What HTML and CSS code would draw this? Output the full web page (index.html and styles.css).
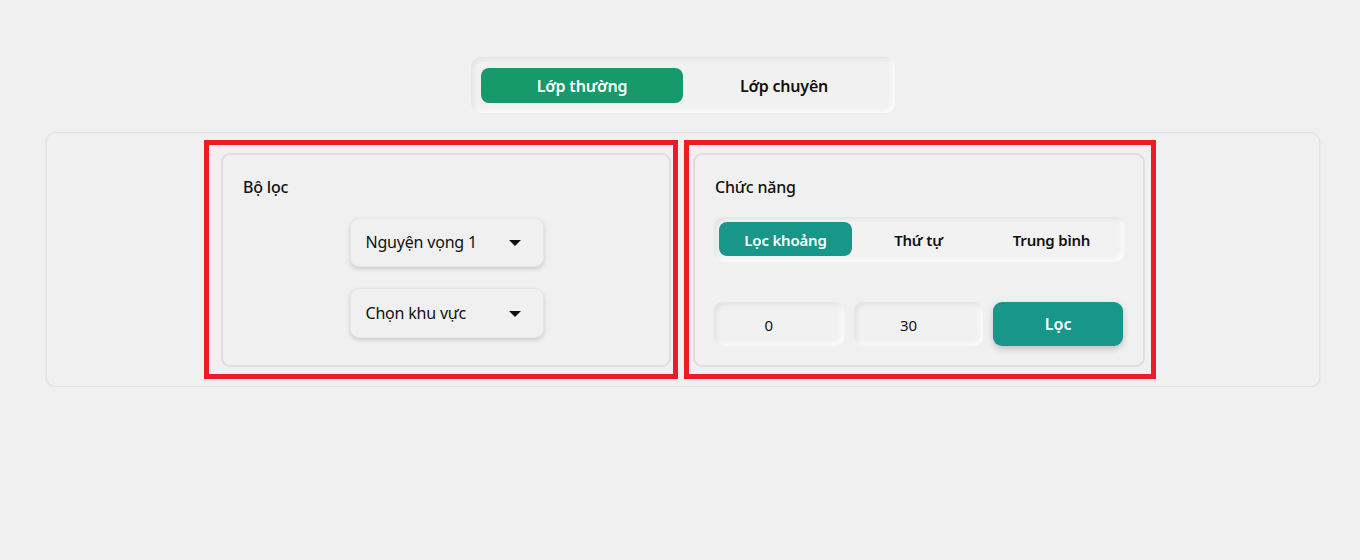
FILE: index.html
```html
<!DOCTYPE html>
<html lang="vi">
<head>
<meta charset="utf-8">
<title>Lọc điểm</title>
<link rel="stylesheet" href="styles.css">
</head>
<body>
<div class="page">
  <div class="class-tabs">
    <button class="class-tab active">Lớp thường</button>
    <button class="class-tab">Lớp chuyên</button>
  </div>

  <div class="main-card">
    <div class="mark mark-left">
      <section class="panel panel-left">
        <h2 class="panel-title">Bộ lọc</h2>
        <div class="selects">
          <div class="select">
            <span>Nguyện vọng 1</span>
            <svg class="caret" width="12" height="6" viewBox="0 0 12 6"><path d="M0 0H12L6 6Z" fill="#111"/></svg>
          </div>
          <div class="select">
            <span>Chọn khu vực</span>
            <svg class="caret" width="12" height="6" viewBox="0 0 12 6"><path d="M0 0H12L6 6Z" fill="#111"/></svg>
          </div>
        </div>
      </section>
    </div>

    <div class="mark mark-right">
      <section class="panel panel-right">
        <h2 class="panel-title">Chức năng</h2>
        <div class="func-tabs">
          <button class="func-tab active">Lọc khoảng</button>
          <button class="func-tab">Thứ tự</button>
          <button class="func-tab">Trung bình</button>
        </div>
        <div class="range-row">
          <div class="num-input">0</div>
          <div class="num-input">30</div>
          <button class="filter-btn">Lọc</button>
        </div>
      </section>
    </div>
  </div>
</div>
</body>
</html>
```

FILE: styles.css
```css
* { box-sizing: border-box; }

html, body {
  margin: 0;
  padding: 0;
  background: #f0f0f0;
}

body {
  font-family: "Noto Sans", "Open Sans", sans-serif;
  color: #111;
  font-size: 16px;
}

.page {
  padding: 57px 40px 0 46px;
  display: flex;
  flex-direction: column;
  align-items: center;
}

button {
  font-family: inherit;
  border: none;
  background: transparent;
  cursor: pointer;
  padding: 0;
  color: #111;
}

/* top class tabs */
.class-tabs {
  display: flex;
  padding: 11px 10px 10px 10px;
  border-radius: 10px;
  background: #f1f1f1;
  box-shadow: inset 2px 2px 5px rgba(0,0,0,0.07), inset -2px -2px 5px rgba(255,255,255,0.9);
}

.class-tab {
  width: 202px;
  height: 35px;
  border-radius: 8px;
  font-size: 16px;
  font-weight: 600;
  letter-spacing: -0.2px;
}

.class-tab.active {
  background: #16996b;
  color: #fff;
}

/* main card */
.main-card {
  align-self: stretch;
  margin-top: 19px;
  display: flex;
  justify-content: center;
  gap: 6px;
  padding: 7px 6px 7px 0;
  border-radius: 10px;
  border: 1px solid #e2e2e2;
  background: #f0f0f0;
  box-shadow: 0 1px 3px rgba(0,0,0,0.07);
}

.mark {
  border: 5px solid #ed1c24;
  display: flex;
}

.mark-left { padding: 8px 2px 7px 12px; }
.mark-right { padding: 8px 6px 7px 4px; }

.panel {
  border: 2px solid #dedede;
  border-radius: 9px;
  background: #f0f0f0;
  height: 214px;
  padding: 20px 20px 0 20px;
}

.panel-left { width: 450px; }
.panel-right { width: 452px; }

.panel-title {
  margin: 0;
  font-size: 16px;
  font-weight: 500;
  line-height: 24px;
  letter-spacing: -0.2px;
}

/* selects */
.selects {
  margin-top: 19px;
  display: flex;
  flex-direction: column;
  align-items: center;
  gap: 21px;
  padding-left: 1px;
}

.select {
  width: 194px;
  height: 49px;
  display: flex;
  align-items: center;
  justify-content: space-between;
  padding: 0 22px 0 15px;
  border-radius: 9px;
  border: 1px solid #e6e6e6;
  background: #f0f0f0;
  box-shadow: 0 2px 4px rgba(0,0,0,0.16);
  font-size: 16px;
  letter-spacing: -0.2px;
}

.select span { margin-top: -1px; }

.select + .select { height: 50px; }

.caret { display: block; margin-top: 1px; }

/* function tabs */
.func-tabs {
  margin-top: 18px;
  margin-left: -1px;
  width: 410px;
  display: flex;
  padding: 5px 6px 6px 5px;
  border-radius: 9px;
  background: #f2f2f2;
  box-shadow: inset 2px 2px 5px rgba(0,0,0,0.07), inset -2px -2px 5px rgba(255,255,255,0.9);
}

.func-tab {
  width: 133px;
  height: 34px;
  padding-top: 2px;
  border-radius: 8px;
  font-size: 15px;
  font-weight: 600;
  letter-spacing: -0.2px;
}

.func-tab.active {
  background: #179689;
  color: #fff;
}

/* range row */
.range-row {
  margin-top: 40px;
  margin-left: -1px;
  display: flex;
  gap: 10px;
}

.num-input {
  width: 130px;
  height: 44px;
  display: flex;
  align-items: center;
  justify-content: center;
  padding-right: 20px;
  padding-top: 2px;
  border-radius: 9px;
  background: #f1f1f1;
  font-size: 15px;
  box-shadow: inset 2px 2px 5px rgba(0,0,0,0.08), inset -2px -2px 5px rgba(255,255,255,0.95);
}

.filter-btn {
  width: 130px;
  height: 44px;
  border-radius: 9px;
  background: #179689;
  color: #fff;
  font-size: 16px;
  font-weight: 600;
  box-shadow: 0 3px 6px rgba(0,0,0,0.2);
}
```
